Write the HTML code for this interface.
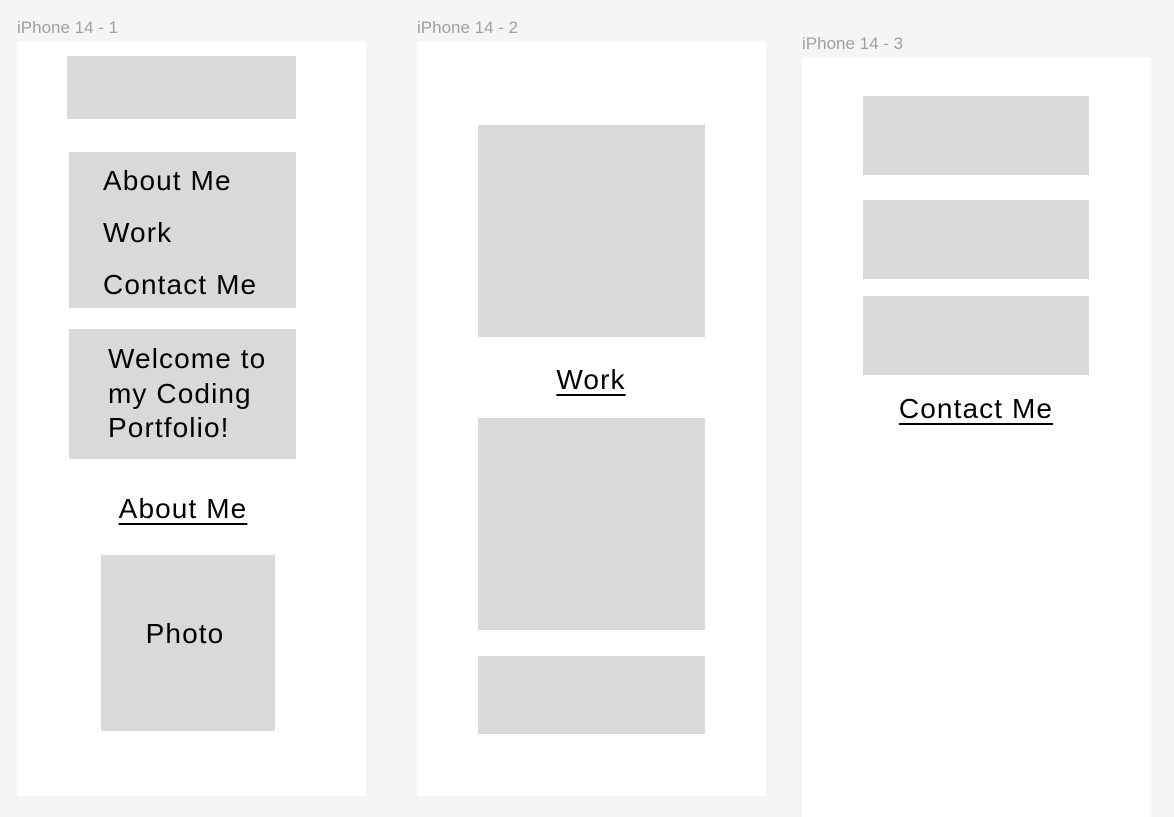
<!DOCTYPE html>
<html><head><meta charset="utf-8"><style>
body{margin:0;width:1174px;height:811px;background:#f5f5f5;position:relative;overflow:hidden;font-family:"Liberation Sans",sans-serif}
.f{position:absolute;background:#fff}
.b{position:absolute;background:#d9d9d9}
.l{position:absolute;color:#a0a0a0;font-size:17px;line-height:16px;letter-spacing:0px}
.t{position:absolute;color:#000;font-size:28px;line-height:32px;white-space:nowrap;letter-spacing:1.1px}
.u{text-decoration:underline;text-underline-offset:5px;text-decoration-thickness:2px}
</style></head><body>
<div class="l" style="left:17px;top:20px">iPhone 14 - 1</div>
<div class="l" style="left:417px;top:20px">iPhone 14 - 2</div>
<div class="l" style="left:802px;top:36px">iPhone 14 - 3</div>
<div class="f" style="left:17px;top:41px;width:349px;height:755px"></div>
<div class="f" style="left:417px;top:41px;width:349px;height:755px"></div>
<div class="f" style="left:802px;top:57px;width:349px;height:760px"></div>

<div class="b" style="left:67px;top:56px;width:229px;height:63px"></div>
<div class="b" style="left:69px;top:152px;width:227px;height:156px"></div>
<div class="t" style="left:103px;top:165px">About Me</div>
<div class="t" style="left:103px;top:217px">Work</div>
<div class="t" style="left:103px;top:269px">Contact Me</div>
<div class="b" style="left:69px;top:329px;width:227px;height:130px"></div>
<div class="t" style="left:108px;top:342px;line-height:34.5px">Welcome to<br>my Coding<br>Portfolio!</div>
<div class="t u" style="left:83px;width:200px;text-align:center;top:493px">About Me</div>
<div class="b" style="left:101px;top:555px;width:174px;height:176px"></div>
<div class="t" style="left:101px;width:168px;text-align:center;top:618px">Photo</div>

<div class="b" style="left:478px;top:125px;width:227px;height:212px"></div>
<div class="t u" style="left:491px;width:200px;text-align:center;top:364px">Work</div>
<div class="b" style="left:478px;top:418px;width:227px;height:212px"></div>
<div class="b" style="left:478px;top:656px;width:227px;height:78px"></div>

<div class="b" style="left:863px;top:96px;width:226px;height:79px"></div>
<div class="b" style="left:863px;top:200px;width:226px;height:79px"></div>
<div class="b" style="left:863px;top:296px;width:226px;height:79px"></div>
<div class="t u" style="left:851px;width:250px;text-align:center;top:393px">Contact Me</div>
</body></html>
